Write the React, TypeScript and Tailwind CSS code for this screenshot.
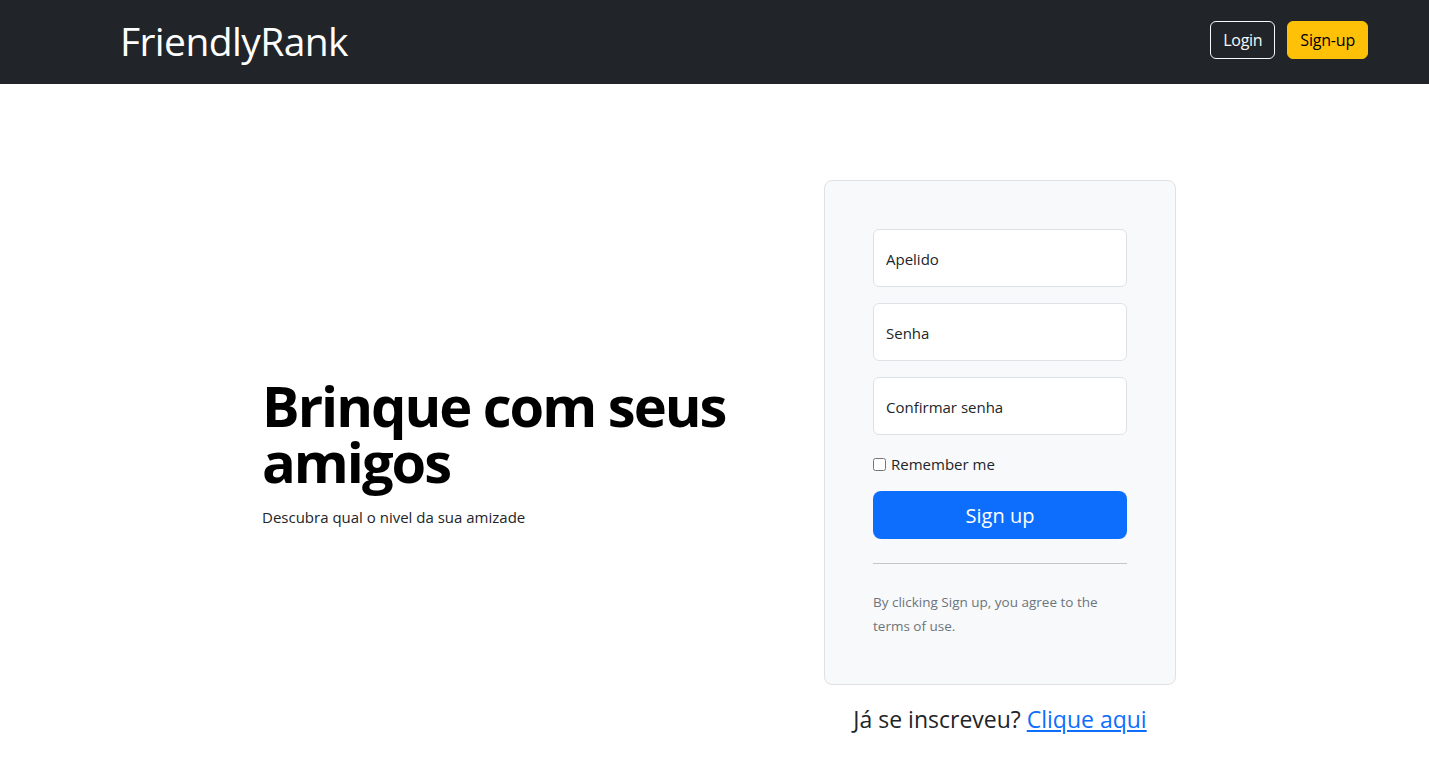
import React from 'react';

const font = { fontFamily: '"Open Sans", "Noto Sans", sans-serif' };

const Field = ({ label, type = 'text' }: { label: string; type?: string }) => (
    <input
        type={type}
        placeholder={label}
        className="mb-4 block h-[58px] w-full rounded-md border border-[#dee2e6] bg-white px-3 pt-0.5 text-[15px] text-[#212529] placeholder:text-[#212529] outline-none"
    />
);

export default function App() {
    return (
        <div className="min-h-screen bg-white text-[#212529]" style={font}>
            <nav className="flex h-[84px] items-center justify-between bg-[#212529] pb-1 pl-[120px] pr-[61px]">
                <a href="#" className="text-[39px] leading-none text-white tracking-[-0.6px]">FriendlyRank</a>
                <div className="flex items-center gap-3">
                    <button className="h-[38px] rounded-md border border-[#f8f9fa] px-3 text-base tracking-[-0.3px] text-[#f8f9fa]">Login</button>
                    <button className="h-[38px] rounded-md border border-[#ffc107] bg-[#ffc107] px-3 text-base tracking-[-0.2px] text-black">Sign-up</button>
                </div>
            </nav>

            <main className="flex items-center pl-[262px] pt-24">
                <div className="mb-3 w-[562px]">
                    <h1 className="mb-4 text-[56px] font-bold leading-[1] tracking-[-2px] text-black">Brinque com seus amigos</h1>
                    <p className="text-[15px] leading-6">Descubra qual o nivel da sua amizade</p>
                </div>

                <div className="w-[352px]">
                    <form className="rounded-lg border border-[#dee2e6] bg-[#f8f9fa] px-12 pb-[46px] pt-12">
                        <Field label="Apelido" />
                        <Field label="Senha" type="password" />
                        <Field label="Confirmar senha" type="password" />
                        <label className="mb-4 flex h-6 items-center gap-[5px] pt-0.5 text-[15px]">
                            <input type="checkbox" className="m-0 h-[13px] w-[13px]" />
                            Remember me
                        </label>
                        <button type="button" className="h-12 w-full rounded-lg bg-[#0d6efd] pt-0.5 text-xl text-white">Sign up</button>
                        <hr className="my-6 border-t border-[#c4c6c8]" />
                        <p className="pt-0.5 text-[13.5px] leading-6 text-[#6c757d]">By clicking Sign up, you agree to the terms of use.</p>
                    </form>
                    <p className="mt-4 text-center text-[23px] leading-9">
                        Já se inscreveu? <a href="#" className="text-[#0d6efd] underline">Clique aqui</a>
                    </p>
                </div>
            </main>
        </div>
    );
}
